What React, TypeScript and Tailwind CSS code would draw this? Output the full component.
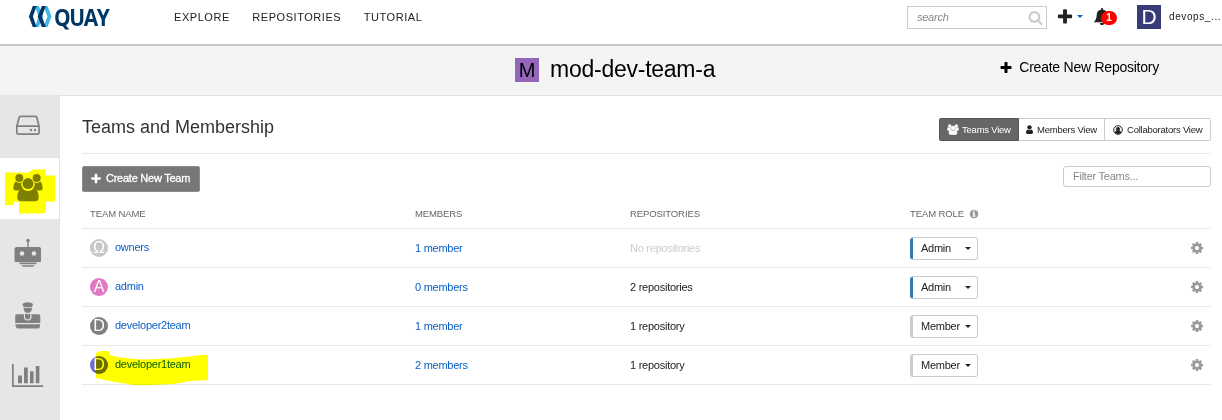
import React from 'react';

const PLUS =
  'M1600 736v192q0 40-28 68t-68 28h-416v416q0 40-28 68t-68 28h-192q-40 0-68-28t-28-68v-416h-416q-40 0-68-28t-28-68v-192q0-40 28-68t68-28h416v-416q0-40 28-68t68-28h192q40 0 68 28t28 68v416h416q40 0 68 28t28 68z';
const COG =
  'M1152 896q0-106-75-181t-181-75-181 75-75 181 75 181 181 75 181-75 75-181zm512-109v222q0 12-8 23t-20 13l-185 28q-19 54-39 91 35 50 107 138 10 12 10 25t-9 23q-27 37-99 108t-94 71q-12 0-26-9l-138-108q-44 23-91 38-16 136-29 186-7 28-36 28h-222q-14 0-24.5-8.500t-11.500-21.500l-28-184q-49-16-90-37l-141 107q-10 9-25 9-14 0-25-11-126-114-165-168-7-10-7-23 0-12 8-23 15-21 51-66.500t54-70.500q-27-50-41-99l-183-27q-13-2-21-12.500t-8-23.500v-222q0-12 8-23t19-13l186-28q14-46 39-92-40-57-107-138-10-12-10-24 0-10 9-23 26-36 98.500-107.500t94.500-71.500q13 0 26 10l138 107q44-23 91-38 16-136 29-186 7-28 36-28h222q14 0 24.500 8.500t11.500 21.500l28 184q49 16 90 37l142-107q9-9 24-9 13 0 25 10 129 119 165 170 7 8 7 22 0 12-8 23-15 21-51 66.500t-54 70.500q26 50 41 98l183 28q13 2 21 12.500t8 23.500z';
const INFO =
  'M1152 1376v-160q0-14-9-23t-23-9h-96v-512q0-14-9-23t-23-9h-320q-14 0-23 9t-9 23v160q0 14 9 23t23 9h96v320h-96q-14 0-23 9t-9 23v160q0 14 9 23t23 9h448q14 0 23-9t9-23zm-128-896v-160q0-14-9-23t-23-9h-192q-14 0-23 9t-9 23v160q0 14 9 23t23 9h192q14 0 23-9t9-23zm640 416q0 209-103 385.500t-279.500 279.500-385.500 103-385.500-103-279.500-279.500-103-385.500 103-385.500 279.500-279.500 385.500-103 385.500 103 279.500 279.500 103 385.500z';
const SEARCH =
  'M1216 832q0-185-131.500-316.500t-316.500-131.500-316.500 131.500-131.500 316.500 131.500 316.500 316.500 131.500 316.500-131.500 131.500-316.500zm512 832q0 52-38 90t-90 38q-54 0-90-38l-343-342q-179 124-399 124-143 0-273.500-55.500t-225-150-150-225-55.500-273.500 55.500-273.500 150-225 225-150 273.500-55.500 273.500 55.500 225 150 150 225 55.500 273.500q0 220-124 399l343 343q37 37 37 90z';

function Glyph({ d, className }: { d: string; className: string }) {
  return (
    <svg viewBox="0 0 1792 1792" className={`shrink-0 ${className}`} fill="currentColor">
      <path d={d} />
    </svg>
  );
}

function Caret({ className }: { className: string }) {
  return (
    <svg viewBox="0 0 6 3" className={`h-[3px] w-[6px] shrink-0 ${className}`} fill="currentColor">
      <path d="M0 0h6L3 3z" />
    </svg>
  );
}

function GroupShapes() {
  return (
    <>
      <circle cx="19.3" cy="20" r="4" />
      <circle cx="36.7" cy="20" r="4" />
      <path d="M15.500 23.500q3.800 2.500 6 .5-1 3.800 1.800 7-2.300.1-3.800 1.500h-3.500q-2.700 0-2.700-2.500 0-4.500 2.200-6.500zM40.500 23.500q-3.800 2.500-6 .5 1 3.800-1.800 7 2.300.1 3.800 1.500H40q2.700 0 2.700-2.500 0-4.500-2.200-6.500z" />
      <circle cx="28" cy="25.600" r="5.500" />
      <path d="M22.500 30.700q5.500 4.500 11 0 5.200.7 5.200 8.800 0 3.800-3.700 3.800H21q-3.700 0-3.700-3.800 0-8.100 5.200-8.800z" />
    </>
  );
}

function Sidebar() {
  const item = 'h-[62.500px] border-b border-[#dde7ee] shrink-0';
  const icon = 'block h-[62px] w-[60px] text-[#808080]';
  return (
    <aside className="flex w-[60px] shrink-0 flex-col border-r border-[#dbe5ec] bg-[#e6e6e6]">
      <div className={item}>
        <svg viewBox="0 0 60 62" className={icon} fill="none" stroke="currentColor" strokeWidth="1.700">
          <path d="M20.500 21.300h15q1 0 1.300 1l2.300 9v6.400q0 1.500-1.500 1.500H18.300q-1.500 0-1.500-1.500v-6.400l2.400-9q.3-1 1.300-1zM17 31.100h22" />
          <g fill="currentColor" stroke="none">
            <circle cx="31" cy="35" r="1.200" />
            <circle cx="35" cy="35" r="1.200" />
          </g>
        </svg>
      </div>
      <div className={`relative bg-white ${item}`}>
        <svg viewBox="0 0 60 62" className={icon} fill="currentColor">
          <GroupShapes />
        </svg>
        <svg viewBox="0 0 60 62" className="absolute left-0 top-0 h-[62px] w-[60px] mix-blend-multiply">
          <path fill="#ff0" d="M5 14.500h23l5-3h12v6h10v26h-9v8q0 4-4 4H19v-11.500h-5v3H5z" />
        </svg>
      </div>
      <div className={item}>
        <svg viewBox="0 0 60 62" className={icon} fill="currentColor">
          <circle cx="28" cy="20.500" r="1.700" />
          <path d="M27.300 21h1.400v7h-1.400z" />
          <path fillRule="evenodd" d="M17 27h22q2 0 2 2v12q0 1-1 1H15.500q-1 0-1-1V29q0-2 2.500-2zM22 31.200a2.300 2.300 0 100 4.600 2.300 2.300 0 000-4.600zm12 0a2.300 2.300 0 100 4.600 2.300 2.300 0 000-4.600z" />
          <path d="M19 42.600h18l-1 1.700H20zM21.500 45.300h13l-1 1.500h-11z" />
        </svg>
      </div>
      <div className={item}>
        <svg viewBox="0 0 60 62" className={icon} fill="currentColor">
          <path d="M22.500 22q0-1.800 2-2.300 3-.7 6.500 0 2 .5 2 2.300l-1.200 2h-8zM23.600 24.800h8.400q0 5-4.200 5.300-4.200-.3-4.200-5.300z" />
          <path d="M17 31.300h6.900v3.200q.5 3 3.800 3 3.500 0 3.800-3v-3.200h7.100q1.700 0 1.700 1.700v7H15.200v-7q0-1.700 1.800-1.700zM25 30.500q2.700 1.600 5.300 0v4q-.4 1.900-2.600 1.900-2.300 0-2.700-1.900z" />
          <path d="M15.500 41.200h24.500v1.300q0 2.700-2 3H18q-2-.3-2.500-3z" />
        </svg>
      </div>
      <div className={item}>
        <svg viewBox="0 0 60 62" className={icon} fill="currentColor">
          <path d="M12 19h1.700v21.200h29.500V42H12zM18 30.500h4v7.700h-4zM24 22.600h3.800v15.600H24zM30 26.200h3.600v12H30zM35.800 21h3.600v17.200h-3.600z" />
        </svg>
      </div>
      <div className="flex-1" />
    </aside>
  );
}

type Team = {
  name: string;
  letter: string;
  avatar: string;
  members: string;
  repos: string;
  reposClass: string;
  role: string;
  bar: string;
  marked?: boolean;
};

const teams: Team[] = [
  { name: 'owners', letter: 'Ω', avatar: 'bg-[#c7c7c7]', members: '1 member', repos: 'No repositories', reposClass: 'text-[#ccc]', role: 'Admin', bar: 'bg-[#337ab7]' },
  { name: 'admin', letter: 'A', avatar: 'bg-[#e377c2]', members: '0 members', repos: '2 repositories', reposClass: 'text-[#222]', role: 'Admin', bar: 'bg-[#337ab7]' },
  { name: 'developer2team', letter: 'D', avatar: 'bg-[#7f7f7f]', members: '1 member', repos: '1 repository', reposClass: 'text-[#222]', role: 'Member', bar: 'bg-[#ccc]' },
  { name: 'developer1team', letter: 'D', avatar: 'bg-[#6b6ecf]', members: '2 members', repos: '1 repository', reposClass: 'text-[#222]', role: 'Member', bar: 'bg-[#ccc]', marked: true },
];

const cols = 'grid grid-cols-[325px_215px_280px_1fr_auto] items-center border-b border-[#e9e9e9] pl-[8px] pr-[7px]';

function TeamRow({ team }: { team: Team }) {
  return (
    <div className={`relative h-[39px] text-[11px] tracking-[-0.250px] ${cols}`}>
      <div className="flex items-center">
        <span className={`flex h-[18px] w-[18px] items-center justify-center rounded-full text-[16px] leading-[18px] tracking-normal text-white ${team.avatar}`}>
          {team.letter}
        </span>
        <a className="ml-[7px] pb-px text-[#0b5fc4]">{team.name}</a>
      </div>
      <a className="text-[#0b5fc4]">{team.members}</a>
      <span className={team.reposClass}>{team.repos}</span>
      <div className="flex h-[23px] w-[68px] items-center overflow-hidden rounded-[3px] border border-l-0 border-[#ccc] text-[#222]">
        <span className={`h-[23px] w-[3px] shrink-0 ${team.bar}`} />
        <span className="ml-[8px] flex-1 pt-px">{team.role}</span>
        <Caret className="mr-[6px] text-[#222]" />
      </div>
      <Glyph d={COG} className="h-[14px] w-[14px] text-[#999]" />
      {team.marked && (
        <svg viewBox="0 0 116 36" className="absolute left-[14px] top-[4px] h-[36px] w-[116px] mix-blend-multiply">
          <path fill="#ff0" d="M0 3l5-2h8v4q10 3 21 3.500 13 1.500 26 .5 24-1 44-4h8v25l-18 1q-8 2-17 3-20 1.500-40 1-10-2-18-3L0 28z" />
        </svg>
      )}
    </div>
  );
}

export default function App() {
  return (
    <div className="flex h-[420px] w-[1222px] flex-col overflow-hidden bg-white font-['Liberation_Sans',Arial,sans-serif] text-[#333]">
      <header className="flex h-[46px] shrink-0 items-start border-b-2 border-[#c9c9c9] bg-white">
        <div className="flex w-[146px] shrink-0 items-start">
          <svg viewBox="0 0 24 26" className="ml-[28px] mt-[4px] h-[26px] w-[24px] shrink-0">
            <path fill="#40b4e5" d="M7 2h3.800L15 12.500 10.800 23H7l3.500-10.500z" />
            <path fill="#40b4e5" d="M15.500 2h4l4 10.500-4 10.500h-4l4-10.500z" />
            <path fill="#003764" d="M4.800 2h3.800L4.900 12.500 8.600 23H4.800L.9 12.500zM13.800 2h4l-3.900 10.500L17.800 23h-4l-4-10.500z" />
          </svg>
          <span className="ml-[2px] w-[66px] origin-left scale-x-[0.910] whitespace-nowrap font-['Open_Sans',sans-serif] text-[23px] font-bold leading-[34px] tracking-[-1.500px] text-[#003764]">QUAY</span>
        </div>
        <nav className="ml-[28px] mt-[11px] flex gap-[22.500px] text-[11px] leading-[13px] tracking-[0.550px] text-[#222]">
          <a>EXPLORE</a>
          <a>REPOSITORIES</a>
          <a>TUTORIAL</a>
        </nav>
        <div className="ml-auto flex items-start">
          <div className="mt-[6px] flex h-[23px] w-[140px] items-center justify-between border border-[#ccc] pl-[9px] pr-[3px] text-[11px] italic tracking-[-0.250px] text-[#888]">
            <span>search</span>
            <Glyph d={SEARCH} className="h-[15px] w-[15px] text-[#ccc]" />
          </div>
          <Glyph d={PLUS} className="ml-[9px] mt-[8px] h-[18px] w-[18px] text-[#222]" />
          <Caret className="ml-[3px] mt-[15px] text-[#0b62c4]" />
          <div className="relative ml-[10px] mt-[8px] h-[18px] w-[26px]">
            <svg viewBox="0 0 18 18" className="h-[18px] w-[18px]" fill="#222">
              <path d="M8.200 0h1.600v1.400Q14.300 2.200 14.300 7q0 4.500 3 7.300H.7q3-2.800 3-7.300 0-4.800 4.500-5.600zM6.800 15h4.400Q11 17.200 9 17.200T6.800 15z" />
            </svg>
            <span className="absolute left-[8px] top-[3px] flex h-[14px] w-[16px] items-center justify-center rounded-full bg-[#f00] text-[10px] font-bold leading-[14px] text-white">1</span>
          </div>
          <span className="ml-[18px] mt-[5px] flex h-[24px] w-[24px] items-center justify-center bg-[#393b79] text-[21px] leading-[24px] text-white">D</span>
          <span className="ml-[8px] mt-[10px] w-[53px] whitespace-nowrap text-[10px] leading-[13px] tracking-[0.600px] text-[#222]">devops_...</span>
        </div>
      </header>

      <section className="flex h-[50px] shrink-0 items-start border-b border-[#e2e2e2] bg-[#f4f4f4] text-black">
        <span className="ml-[515px] mt-[12px] flex h-[24px] w-[24px] items-center justify-center bg-[#9467bd] text-[20px] leading-[24px]">M</span>
        <h1 className="ml-[11px] mt-[9px] text-[23px] leading-[29px] tracking-[-0.250px]">mod-dev-team-a</h1>
        <a className="ml-auto mr-[63px] mt-[13px] flex items-center text-[14px] leading-[17px] tracking-[-0.240px]">
          <Glyph d={PLUS} className="mr-[6px] h-[14px] w-[14px]" />
          Create New Repository
        </a>
      </section>

      <div className="-mt-px flex min-h-0 flex-1">
        <Sidebar />
        <main className="ml-[22px] w-[1129px] shrink-0">
          <div className="flex h-[59px] items-start justify-between border-b border-[#e9e9e9]">
            <h2 className="mt-[21px] text-[18px] leading-[22px]">Teams and Membership</h2>
            <div className="mt-[23px] flex h-[23px] text-[9.500px] leading-[21px] tracking-[-0.230px] text-[#222]">
              <span className="flex w-[80px] items-center rounded-l-[2px] border border-[#555] bg-[#666] pl-[7px] text-white">
                <svg viewBox="13 15 30 29" className="mr-[3px] h-[11px] w-[12px]" fill="currentColor" stroke="currentColor">
                  <GroupShapes />
                </svg>
                Teams View
              </span>
              <span className="flex w-[86px] items-center border-y border-r border-[#ccc] pl-[7px]">
                <svg viewBox="0 0 8 10" className="mr-[4px] h-[9px] w-[7px]" fill="currentColor">
                  <circle cx="4" cy="2.500" r="2.500" />
                  <path d="M2 5q2 1.500 4 0 2 .3 2 3.500Q8 10 6.500 10h-5Q0 10 0 8.500 0 5.300 2 5z" />
                </svg>
                Members View
              </span>
              <span className="flex w-[106px] items-center rounded-r-[2px] border-y border-r border-[#ccc] pl-[8px]">
                <svg viewBox="0 0 10 10" className="mr-[4px] h-[10px] w-[10px]" fill="currentColor">
                  <circle cx="5" cy="5" r="4.300" fill="none" stroke="currentColor" />
                  <circle cx="5" cy="3.900" r="2" />
                  <path d="M2 8q.2-2.500 1.500-2.700 1.500 1 3 0Q7.800 5.500 8 8 5 10 2 8z" />
                </svg>
                Collaborators View
              </span>
            </div>
          </div>
          <div className="flex items-start justify-between pt-[12px]">
            <button className="flex h-[26px] w-[118px] items-center rounded-[2px] border border-[#8c8c8c] bg-[#777] pb-px pl-[7px] text-[11px] font-normal tracking-[-0.250px] text-white [-webkit-text-stroke:0.300px_white]">
              <Glyph d={PLUS} className="mr-[4px] h-[12px] w-[12px]" />
              Create New Team
            </button>
            <div className="flex h-[21px] w-[148px] items-center rounded-[3px] border border-[#ccc] pl-[9px] text-[11px] tracking-[-0.250px] text-[#888]">
              Filter Teams...
            </div>
          </div>
          <div className={`h-[37px] pt-[8px] text-[9.500px] tracking-[-0.100px] text-[#666] ${cols}`}>
            <span>TEAM NAME</span>
            <span>MEMBERS</span>
            <span>REPOSITORIES</span>
            <span className="flex items-center">
              TEAM ROLE
              <Glyph d={INFO} className="ml-[5px] h-[10px] w-[10px] text-[#999]" />
            </span>
            <span />
          </div>
          {teams.map((team) => (
            <TeamRow key={team.name} team={team} />
          ))}
        </main>
      </div>
    </div>
  );
}
